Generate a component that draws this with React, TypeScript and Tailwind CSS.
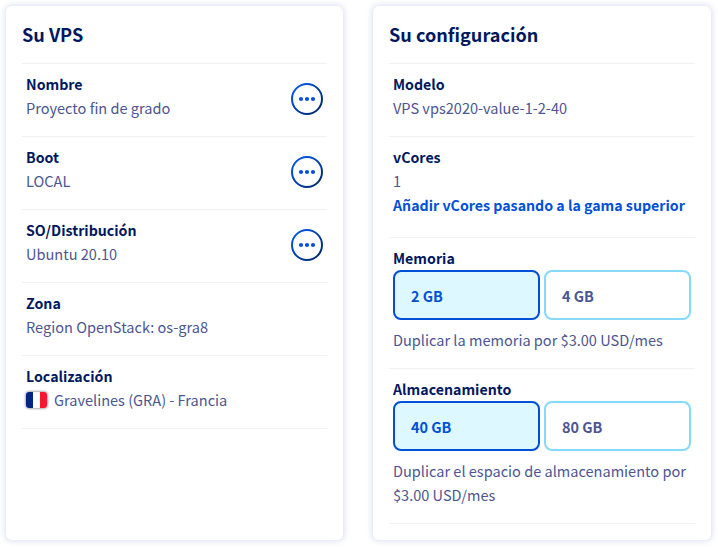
import type { ReactNode } from 'react';

function Card({ title, width, children }: { title: string; width: string; children: ReactNode }) {
  return (
    <section className={`${width} h-[534px] shrink-0 rounded-md bg-white px-4 pt-4 shadow-[0_0_6px_1px_rgba(0,0,180,0.14)]`}>
      <h2 className="box-content h-[41px] border-b border-[#f1f1f3] text-[18.1px] leading-[24px] font-bold text-[#00185e]">{title}</h2>
      <dl>{children}</dl>
    </section>
  );
}

function Row({ label, height = 'h-[73px]', action, children }: { label: string; height?: string; action?: boolean; children: ReactNode }) {
  return (
    <div className={`${height} flex justify-between border-b border-[#f1f1f3] px-1 pt-2`}>
      <div className="min-w-0">
        <dt className="text-[14.2px] font-bold text-[#00185e]">{label}</dt>
        <dd>{children}</dd>
      </div>
      {action && (
        <button className="mt-[11px] size-8 shrink-0" aria-label={label}>
          <svg viewBox="0 0 32 32" className="size-8">
            <defs>
              <linearGradient id="ring" x1="0" y1="0" x2="1" y2="1">
                <stop offset="0.1" stopColor="#0058e8" />
                <stop offset="0.9" stopColor="#002a70" />
              </linearGradient>
            </defs>
            <circle cx="16" cy="16" r="15" fill="none" stroke="url(#ring)" strokeWidth="2" />
            <circle cx="10" cy="16" r="2.1" fill="#0050d7" />
            <circle cx="16" cy="16" r="2.1" fill="#0050d7" />
            <circle cx="22" cy="16" r="2.1" fill="#0050d7" />
          </svg>
        </button>
      )}
    </div>
  );
}

function Options({ items }: { items: string[] }) {
  return (
    <div className="mb-2 flex gap-1">
      {items.map((item, i) => (
        <button
          key={item}
          className={`h-[50px] w-[147px] rounded-lg border-2 px-4 pt-px text-left text-[14.4px] font-bold ${
            i === 0 ? 'border-[#0050d7] bg-[#def8ff] text-[#0050d7]' : 'border-[#85d9fd] bg-white text-[#4d5592]'
          }`}
        >
          {item}
        </button>
      ))}
    </div>
  );
}

export default function App() {
  return (
    <main className="flex h-[547px] w-[718px] gap-[30px] overflow-hidden bg-white pt-1.5 pl-1.5 font-['Noto_Sans_CJK_SC',sans-serif] text-[14.56px] leading-6 text-[#4d5592]">
      <Card title="Su VPS" width="w-[337px]">
        <Row label="Nombre" action>Proyecto fin de grado</Row>
        <Row label="Boot" action>LOCAL</Row>
        <Row label="SO/Distribución" action>Ubuntu 20.10</Row>
        <Row label="Zona">Region OpenStack: os-gra8</Row>
        <Row label="Localización">
          <span className="flex items-center">
            <span className="mr-[7px] flex h-4 w-[21px] overflow-hidden rounded-[3px] shadow-[0_0_3px_rgba(0,0,0,0.65)]">
              <span className="flex-1 bg-[#00267f]" />
              <span className="flex-1 bg-white" />
              <span className="flex-1 bg-[#f31830]" />
            </span>
            Gravelines (GRA) - Francia
          </span>
        </Row>
      </Card>
      <Card title="Su configuración" width="w-[338px]">
        <Row label="Modelo">VPS vps2020-value-1-2-40</Row>
        <Row label="vCores" height="h-[101px]">
          <span className="block">1</span>
          <a className="block text-[14.2px] font-bold whitespace-nowrap text-[#0050d7]">Añadir vCores pasando a la gama superior</a>
        </Row>
        <Row label="Memoria" height="h-[131px]">
          <Options items={['2 GB', '4 GB']} />
          Duplicar la memoria por $3.00 USD/mes
        </Row>
        <Row label="Almacenamiento" height="h-[155px]">
          <Options items={['40 GB', '80 GB']} />
          Duplicar el espacio de almacenamiento por $3.00 USD/mes
        </Row>
      </Card>
    </main>
  );
}
